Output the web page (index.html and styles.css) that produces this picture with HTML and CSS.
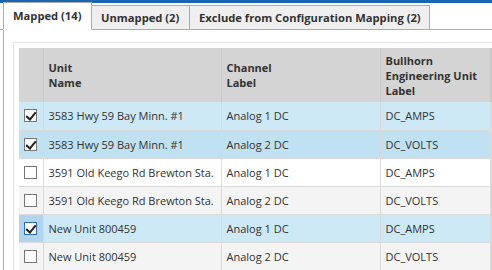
FILE: index.html
```html
<!DOCTYPE html>
<html lang="en">

<head>
    <meta charset="UTF-8">
    <meta name="viewport" content="width=device-width, initial-scale=1.0">
    <title>Configuration Mapping</title>
    <link rel="stylesheet" href="styles.css">
</head>

<body>
    <div class="topbar"></div>

    <div class="tabs">
        <div class="tab active">Mapped (14)</div>
        <div class="tab">Unmapped (2)</div>
        <div class="tab">Exclude from Configuration Mapping (2)</div>
    </div>

    <div class="panel">
        <div class="grid-box">
            <table class="grid">
                <colgroup>
                    <col class="c-check">
                    <col class="c-unit">
                    <col class="c-channel">
                    <col class="c-eng">
                    <col>
                </colgroup>
                <thead>
                    <tr>
                        <th></th>
                        <th>Unit<br>Name</th>
                        <th>Channel<br>Label</th>
                        <th>Bullhorn<br>Engineering Unit<br>Label</th>
                        <th></th>
                    </tr>
                </thead>
                <tbody>
                    <tr class="selected">
                        <td><span class="check on"></span></td>
                        <td>3583 Hwy 59 Bay Minn. #1</td>
                        <td>Analog 1 DC</td>
                        <td>DC_AMPS</td>
                        <td></td>
                    </tr>
                    <tr class="selected alt">
                        <td><span class="check on"></span></td>
                        <td>3583 Hwy 59 Bay Minn. #1</td>
                        <td>Analog 2 DC</td>
                        <td>DC_VOLTS</td>
                        <td></td>
                    </tr>
                    <tr>
                        <td><span class="check"></span></td>
                        <td>3591 Old Keego Rd Brewton Sta.</td>
                        <td>Analog 1 DC</td>
                        <td>DC_AMPS</td>
                        <td></td>
                    </tr>
                    <tr class="alt">
                        <td><span class="check"></span></td>
                        <td>3591 Old Keego Rd Brewton Sta.</td>
                        <td>Analog 2 DC</td>
                        <td>DC_VOLTS</td>
                        <td></td>
                    </tr>
                    <tr class="selected focus">
                        <td><span class="check on"></span></td>
                        <td>New Unit 800459</td>
                        <td>Analog 1 DC</td>
                        <td>DC_AMPS</td>
                        <td></td>
                    </tr>
                    <tr class="alt">
                        <td><span class="check"></span></td>
                        <td>New Unit 800459</td>
                        <td>Analog 2 DC</td>
                        <td>DC_VOLTS</td>
                        <td></td>
                    </tr>
                </tbody>
            </table>
        </div>
    </div>
</body>

</html>
```

FILE: styles.css
```css
* {
    padding: 0;
    margin: 0;
    box-sizing: border-box;
}

body {
    width: 492px;
    height: 270px;
    overflow: hidden;
    background-color: #fff;
    font-family: "Open Sans", "Noto Sans", sans-serif;
    font-size: 11px;
    color: #333;
}

.topbar {
    height: 3px;
    background-color: #1766b4;
}

/* tab strip */
.tabs {
    display: flex;
    align-items: flex-end;
    height: 27px;
    padding-left: 3px;
    border-bottom: 1px solid #acacac;
}

.tab {
    height: 25px;
    line-height: 23px;
    padding: 0 9px;
    margin-bottom: -1px;
    margin-left: -1px;
    background-color: #efefef;
    border: 1px solid #acacac;
    font-size: 11.2px;
    font-weight: bold;
    color: #333;
    white-space: nowrap;
}

.tab:first-child {
    margin-left: 0;
}

.tab.active {
    position: relative;
    height: 28px;
    line-height: 26px;
    width: 89px;
    background-color: #fff;
    border-bottom-color: #fff;
    z-index: 1;
}

.tabs .tab:nth-child(2) {
    width: 99px;
}

.tabs .tab:nth-child(3) {
    width: 241px;
}

/* panel */
.panel {
    margin-left: 3px;
    height: 240px;
    border-left: 1px solid #acacac;
    padding: 12px 0 0 9px;
}

.grid-box {
    height: 100%;
    border-left: 1px solid #e3e3e3;
    border-top: 1px solid #e3e3e3;
    padding: 5px 0 0 5px;
    overflow: hidden;
}

.grid {
    width: 100%;
    table-layout: fixed;
    border-collapse: collapse;
}

.c-check {
    width: 24px;
}

.c-unit {
    width: 178px;
}

.c-channel {
    width: 159px;
}

.c-eng {
    width: 110px;
}

.grid th {
    height: 54px;
    padding: 0 5px;
    background-color: #d4d4d4;
    border-right: 1px solid #cacaca;
    text-align: left;
    font-weight: bold;
    line-height: 15px;
    vertical-align: middle;
}

.grid th:last-child,
.grid td:last-child {
    padding: 0;
}

.grid td {
    height: 28px;
    padding: 0 5px;
    border-right: 1px solid #dadada;
    border-bottom: 1px solid #dadada;
    white-space: nowrap;
    overflow: hidden;
    vertical-align: middle;
}

.grid td:first-child {
    padding: 0 0 0 5px;
}

.grid tr.alt td {
    background-color: #f4f4f4;
}

.grid tr.selected td {
    background-color: #cde9f6;
}

.grid tr.selected.alt td {
    background-color: #c0e1f1;
}

.grid tr.focus td:first-child {
    background-color: #b1d5ef;
}

/* checkbox */
.check {
    display: block;
    position: relative;
    width: 13px;
    height: 13px;
    border: 1px solid #777;
    background-color: #fff;
}

.check.on::after {
    content: "";
    position: absolute;
    left: 3px;
    top: 0px;
    width: 4px;
    height: 8px;
    border-right: 2px solid #222;
    border-bottom: 2px solid #222;
    transform: rotate(40deg);
}

.focus .check {
    border-color: #2b6ec4;
}
```
